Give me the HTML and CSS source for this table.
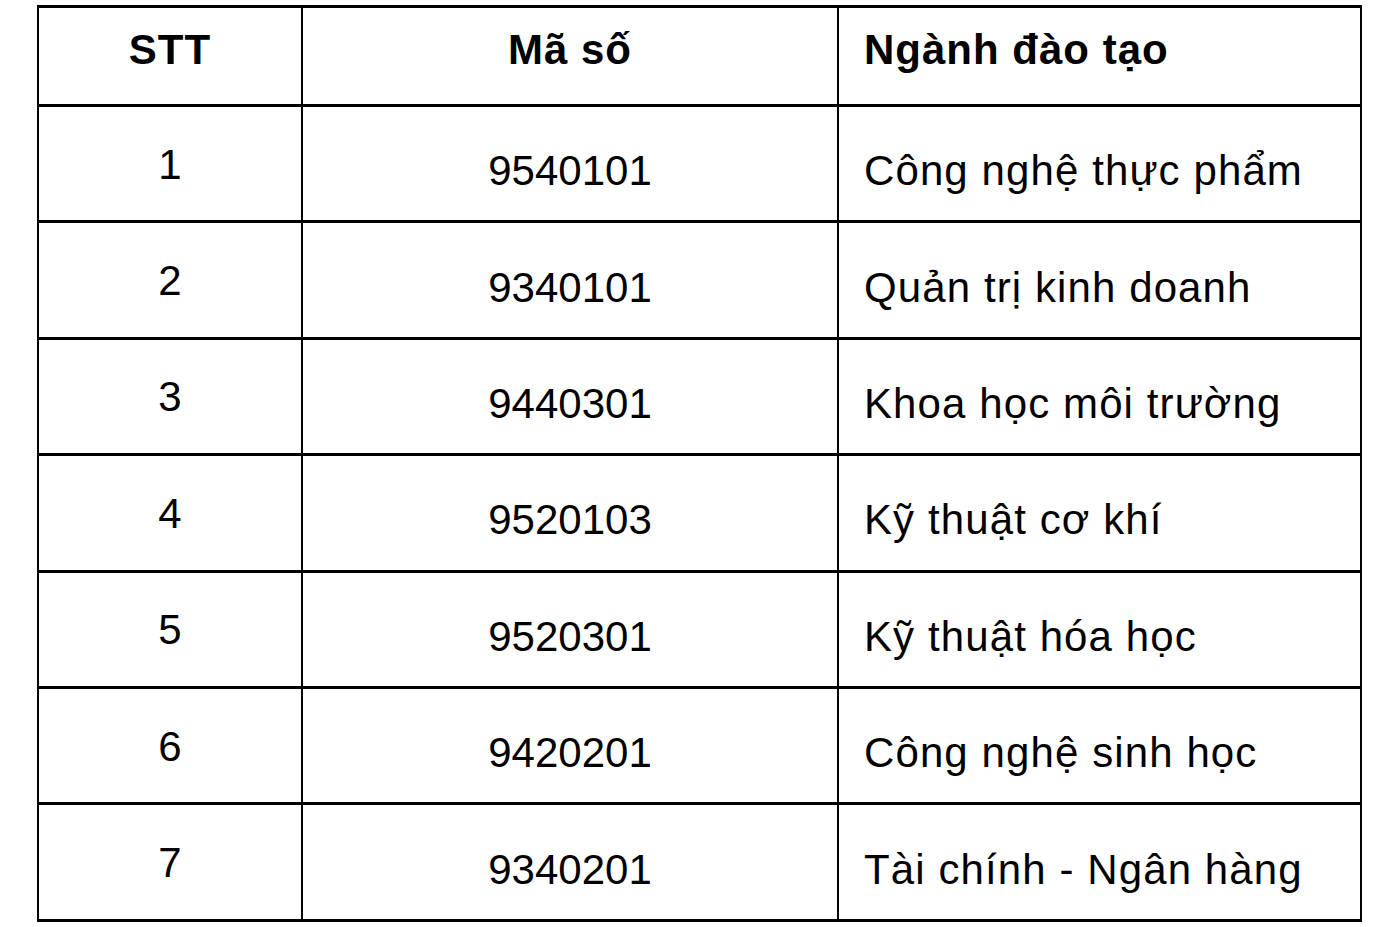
FILE: index.html
```html
<!DOCTYPE html>
<html lang="vi">
<head>
<meta charset="utf-8">
<title>Ngành đào tạo</title>
<link rel="stylesheet" href="styles.css">
</head>
<body>
<div class="page">
<table class="grid">
  <colgroup>
    <col class="c-stt">
    <col class="c-code">
    <col class="c-name">
  </colgroup>
  <thead>
    <tr>
      <th class="stt">STT</th>
      <th class="code">Mã số</th>
      <th class="name">Ngành đào tạo</th>
    </tr>
  </thead>
  <tbody>
    <tr><td class="stt">1</td><td class="code">9540101</td><td class="name">Công nghệ thực phẩm</td></tr>
    <tr><td class="stt">2</td><td class="code">9340101</td><td class="name">Quản trị kinh doanh</td></tr>
    <tr><td class="stt">3</td><td class="code">9440301</td><td class="name">Khoa học môi trường</td></tr>
    <tr><td class="stt">4</td><td class="code">9520103</td><td class="name">Kỹ thuật cơ khí</td></tr>
    <tr><td class="stt">5</td><td class="code">9520301</td><td class="name">Kỹ thuật hóa học</td></tr>
    <tr><td class="stt">6</td><td class="code">9420201</td><td class="name">Công nghệ sinh học</td></tr>
    <tr><td class="stt">7</td><td class="code">9340201</td><td class="name">Tài chính - Ngân hàng</td></tr>
  </tbody>
</table>
</div>
</body>
</html>
```

FILE: styles.css
```css
html, body {
  margin: 0;
  padding: 0;
  background: #ffffff;
}

.page {
  padding: 5px 0 0 37px;
}

.grid {
  border-collapse: collapse;
  table-layout: fixed;
  width: 1323px;
  font-family: "Liberation Sans", Arial, Helvetica, sans-serif;
  font-size: 42px;
  line-height: 48px;
  color: #000;
}

.c-stt { width: 264px; }
.c-code { width: 536px; }
.c-name { width: 523px; }

.grid th,
.grid td {
  border-top: 3px solid #000;
  border-bottom: 3px solid #000;
  border-left: 2px solid #000;
  border-right: 2px solid #000;
  padding: 0;
  vertical-align: middle;
  white-space: nowrap;
}

.grid thead tr {
  height: 99px;
}

.grid tbody tr {
  height: 116.4px;
}

.grid thead th {
  font-weight: bold;
  letter-spacing: 1px;
  padding-bottom: 12px;
}

.grid .stt,
.grid .code {
  text-align: center;
}

.grid .name {
  text-align: left;
  padding-left: 25px;
}

.grid tbody .name {
  letter-spacing: 1.1px;
}

.grid tbody .stt {
  padding-top: 2px;
}

.grid tbody .code,
.grid tbody .name {
  padding-top: 15px;
}
```
